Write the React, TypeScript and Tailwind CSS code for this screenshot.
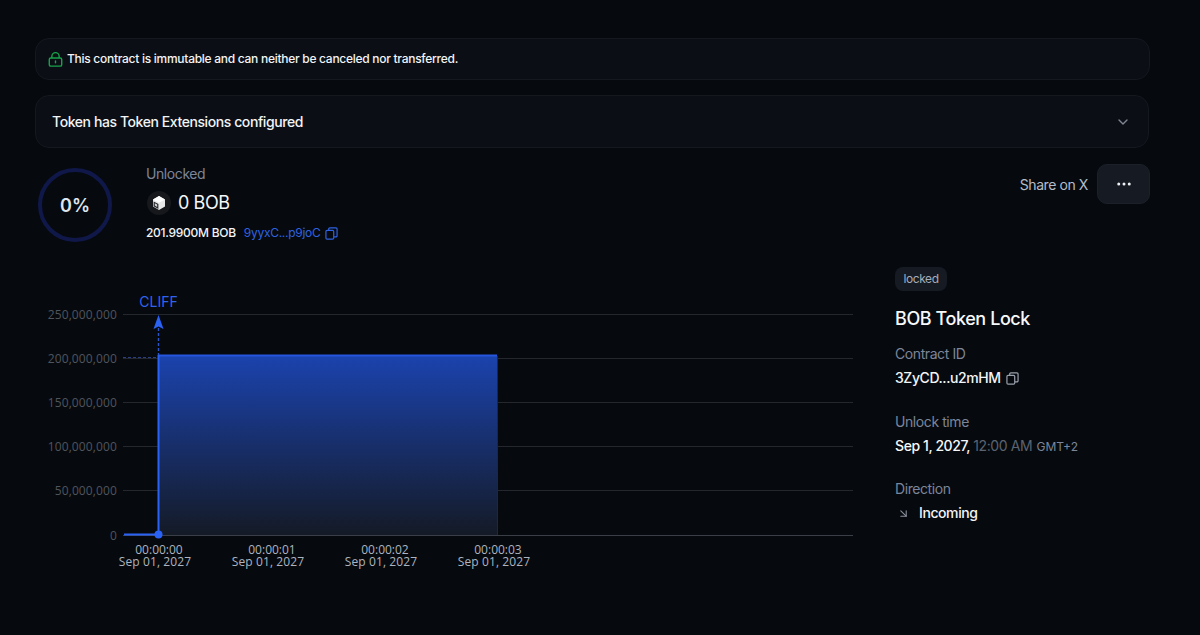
import { ArrowDownRight, ChevronDown, Ellipsis } from "lucide-react";

const yTicks = [
  { label: "250,000,000", y: 314 },
  { label: "200,000,000", y: 358 },
  { label: "150,000,000", y: 402 },
  { label: "100,000,000", y: 446 },
  { label: "50,000,000", y: 490 },
  { label: "0", y: 535 },
];

const xTicks = [
  { time: "00:00:00", x: 155 },
  { time: "00:00:01", x: 268 },
  { time: "00:00:02", x: 381 },
  { time: "00:00:03", x: 494 },
];

function CopyIcon({ className }: { className: string }) {
  return (
    <svg viewBox="0 0 14 14" fill="none" stroke="currentColor" strokeWidth="1.3" className={className}>
      <rect x="1" y="3.6" width="8.4" height="9.4" rx="1.2" />
      <path d="M4 3.4V2.2A1.2 1.2 0 0 1 5.2 1h6.6A1.2 1.2 0 0 1 13 2.2v7.2a1.2 1.2 0 0 1-1.2 1.2H9.6" />
    </svg>
  );
}

function LockIcon() {
  return (
    <svg viewBox="0 0 14 14" fill="none" stroke="#16a34a" strokeWidth="1.3" className="h-[15px] w-[15px]">
      <rect x="1.2" y="5.6" width="11.6" height="7.6" rx="1.4" />
      <path d="M3.6 5.6V4a3.4 3.4 0 0 1 6.8 0v1.6" />
      <path d="M7 8.4v1.6" strokeLinecap="round" />
    </svg>
  );
}

function TokenLogo() {
  return (
    <div className="flex h-[24px] w-[24px] items-center justify-center rounded-full bg-[#16181c]">
      <svg viewBox="0 0 16 16" className="h-[16px] w-[16px]">
        <path d="M8 1 14 4.4V11.6L8 15 2 11.6V4.4Z" fill="#e8e8e8" />
        <path d="M2.6 6.4 7.4 9V14L2.6 11.3Z" fill="#26282c" />
        <path d="M3.8 8.2 6.2 9.6V12L3.8 10.6Z" fill="#d5d5d5" />
        <path d="M8 1 14 4.4 8 7.8 2 4.4Z" fill="#ffffff" />
      </svg>
    </div>
  );
}

function Chart() {
  return (
    <svg viewBox="35 285 820 295" className="h-[295px] w-[820px] shrink-0 tracking-normal">
      <defs>
        <linearGradient id="area" x1="0" y1="0" x2="0" y2="1">
          <stop offset="0%" stopColor="#1b43ae" />
          <stop offset="100%" stopColor="#141a26" />
        </linearGradient>
      </defs>
      {yTicks.map((t) => (
        <g key={t.label}>
          <line x1="123" x2="853" y1={t.y + 0.5} y2={t.y + 0.5} stroke={t.y === 535 ? "#3a3e46" : "#24272e"} />
          <text
            x="117"
            y={t.y + 4.5}
            textAnchor="end"
            fill="#50545c"
            className="text-[12px] tracking-[0.01em] [font-family:'Open_Sans',sans-serif]"
          >
            {t.label}
          </text>
        </g>
      ))}
      <rect x="159" y="355" width="338" height="180" fill="url(#area)" />
      <line x1="497.5" x2="497.5" y1="356" y2="535" stroke="#24272e" />
      <line x1="159" x2="497" y1="355.5" y2="355.5" stroke="#2456e0" strokeWidth="2" />
      <line x1="123" x2="158" y1="357.5" y2="357.5" stroke="#2a3f80" strokeDasharray="3 2" />
      <line x1="158.5" x2="158.5" y1="328" y2="355" stroke="#2a55c8" strokeWidth="1.4" strokeDasharray="3 2" />
      <path d="M158.5 315 163.5 329 158.5 326.5 153.5 329Z" fill="#2a62f5" />
      <line x1="124" x2="159" y1="534.5" y2="534.5" stroke="#2a62f5" strokeWidth="2" />
      <line x1="158.5" x2="158.5" y1="355" y2="535" stroke="#2a62f5" strokeWidth="2" />
      <circle cx="158.5" cy="534.5" r="4" fill="#2a62f5" />
      <text x="158.5" y="307" textAnchor="middle" fill="#2f62ee" className="text-[14px] [font-family:Inter,sans-serif]">
        CLIFF
      </text>
      {xTicks.map((t) => (
        <g key={t.time} fill="#aeb4bf" textAnchor="middle" className="text-[12px] [font-family:'Open_Sans',sans-serif]">
          <text x={t.x + 4} y="554">
            {t.time}
          </text>
          <text x={t.x} y="566" className="tracking-[0.01em]">
            Sep 01, 2027
          </text>
        </g>
      ))}
    </svg>
  );
}

export default function App() {
  return (
    <div className="h-[635px] w-[1200px] overflow-hidden bg-[#060a0f] pt-[38px] pl-[35px] pr-[50px] font-['Inter',sans-serif] tracking-[-0.026em]">
      <div className="flex h-[42px] items-center gap-[4px] rounded-[14px] border border-[#14181f] bg-[#0b0f15] pl-[12px] text-[12px] font-medium tracking-[-0.023em] text-[#f2f4f7]">
        <LockIcon />
        This contract is immutable and can neither be canceled nor transferred.
      </div>
      <div className="mt-[15px] mr-[1px] flex h-[53px] items-center justify-between rounded-[14px] border border-[#14181f] bg-[#0b0f15] pl-[16px] pr-[17px] text-[14px] font-medium text-[#f2f4f7]">
        Token has Token Extensions configured
        <ChevronDown className="h-[16px] w-[16px] text-[#7f8794]" />
      </div>

      <div className="mt-[16px] flex items-start justify-between">
        <div className="flex">
          <div className="mt-[4px] ml-[3px] flex h-[74px] w-[74px] items-center justify-center rounded-full border-[4px] border-[#10184a] text-[18px] font-semibold tracking-normal text-[#dfe5f0]">
            0%
          </div>
          <div className="ml-[34px]">
            <div className="text-[14px] leading-[20px] text-[#7c8599]">Unlocked</div>
            <div className="mt-[6px] flex items-center gap-[7px] pl-[1px]">
              <TokenLogo />
              <span className="text-[18px] leading-[26px] text-[#f5f6f8]">0 BOB</span>
            </div>
            <div className="mt-[9px] flex items-center text-[12px] font-medium leading-[16px] tracking-[-0.023em] text-[#f2f4f7]">
              201.9900M BOB
              <span className="ml-[8px] font-normal text-[#2f62e0]">9yyxC...p9joC</span>
              <CopyIcon className="ml-[5px] h-[13px] w-[13px] text-[#2f62e0]" />
            </div>
          </div>
        </div>
        <div className="flex items-center gap-[9px]">
          <span className="text-[14px] text-[#b4bcc9]">Share on X</span>
          <div className="flex h-[40px] w-[53px] items-center justify-center rounded-[10px] border border-[#1c2029] bg-[#161a23]">
            <Ellipsis className="h-[18px] w-[18px] text-[#eef0f4]" />
          </div>
        </div>
      </div>

      <div className="mt-[43px] flex">
        <Chart />
        <div className="ml-[40px] -mt-[18px] w-[240px]">
          <div className="flex h-[24px] w-[52px] items-center justify-center rounded-[8px] bg-[#161a23] text-[12px] text-[#a5adba]">
            locked
          </div>
          <div className="mt-[15px] text-[18px] font-medium leading-[26px] text-[#f7f8fa]">BOB Token Lock</div>
          <div className="mt-[12px] text-[14px] leading-[20px] text-[#7c8599]">Contract ID</div>
          <div className="mt-[4px] flex items-center gap-[5px] text-[14px] font-medium leading-[20px] text-[#f2f4f7]">
            3ZyCD...u2mHM
            <CopyIcon className="h-[13px] w-[13px] text-[#9aa1ad]" />
          </div>
          <div className="mt-[24px] text-[14px] leading-[20px] text-[#7c8599]">Unlock time</div>
          <div className="mt-[4px] text-[14px] font-medium leading-[20px] text-[#f7f8fa]">
            Sep 1, 2027, <span className="font-normal text-[#5b6370]">12:00 AM</span>{" "}
            <span className="ml-[1px] text-[12px] font-normal tracking-normal text-[#7c8599]">GMT+2</span>
          </div>
          <div className="mt-[22px] text-[14px] leading-[20px] text-[#7c8599]">Direction</div>
          <div className="mt-[4px] flex items-center text-[14px] font-medium leading-[20px] text-[#f2f4f7]">
            <ArrowDownRight className="ml-[2px] h-[13px] w-[13px] text-[#8a919d]" />
            <span className="ml-[9px]">Incoming</span>
          </div>
        </div>
      </div>
    </div>
  );
}
